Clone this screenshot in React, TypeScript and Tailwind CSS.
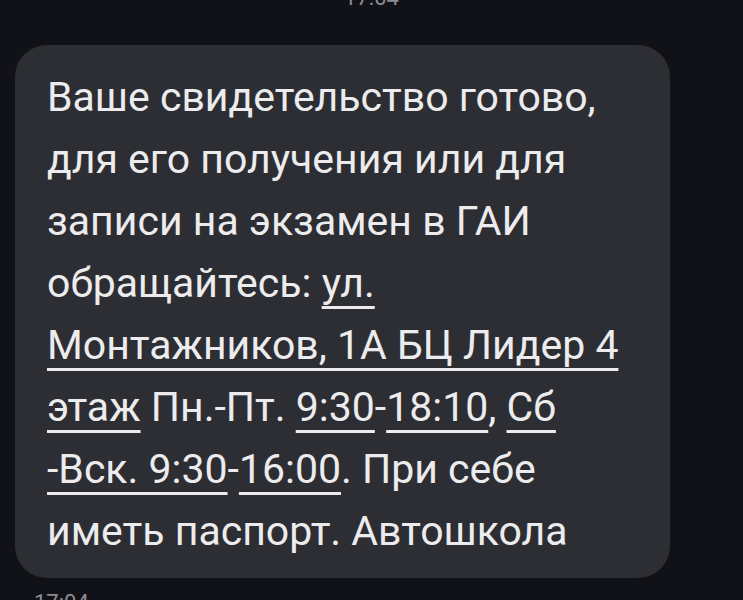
const U = ({ children }: { children: React.ReactNode }) => (
  <span className="underline decoration-[3px] underline-offset-[9px]">{children}</span>
);

export default function App() {
  return (
    <div
      className="w-[743px] h-[600px] overflow-hidden bg-[#111217] relative"
      style={{ fontFamily: "Roboto, 'Noto Sans', sans-serif" }}
    >
      {/* top timestamp, cut off */}
      <div className="absolute left-0 right-0 top-[-19px] text-center text-[22px] text-[#8b8c92]">17:04</div>

      <div className="pt-[45px] pl-[15px]">
        <div className="w-[655px] h-[533px] rounded-[32px] bg-[#2d2e33] pl-[32px] pt-[21px]">
          <div className="text-[41px] leading-[62px] text-[#ececee]">
            <div>Ваше свидетельство готово,</div>
            <div>для его получения или для</div>
            <div>записи на экзамен в ГАИ</div>
            <div>
              обращайтесь: <U>ул.</U>
            </div>
            <div>
              <U>Монтажников, 1А БЦ Лидер 4</U>
            </div>
            <div>
              <U>этаж</U> Пн.-Пт. <U>9:30</U>-<U>18:10</U>, <U>Сб</U>
            </div>
            <div>
              <U>-Вск. 9:30</U>-<U>16:00</U>. При себе
            </div>
            <div>иметь паспорт. Автошкола</div>
          </div>
        </div>
      </div>

      {/* bottom timestamp, cut off */}
      <div className="absolute left-[34px] top-[586px] text-[22px] text-[#8b8c92]">17:04</div>
    </div>
  );
}
